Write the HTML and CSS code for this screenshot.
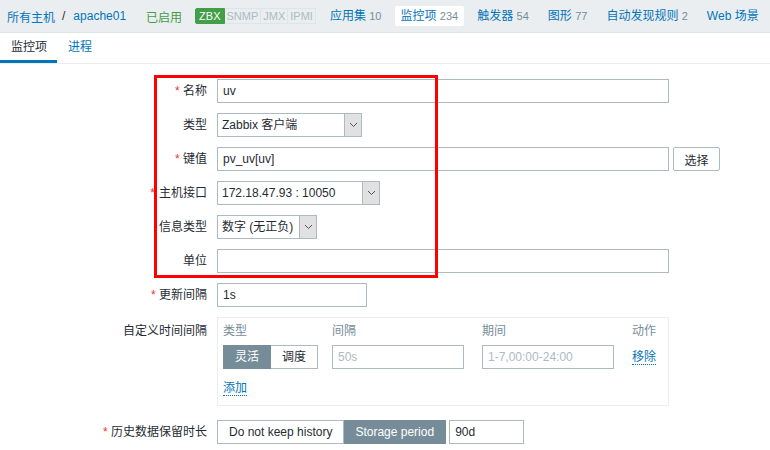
FILE: index.html
```html
<!DOCTYPE html>
<html lang="zh">
<head>
    <meta charset="UTF-8">
    <title>监控项</title>
    <link rel="stylesheet" href="styles.css">
</head>
<body>
    <div class="header">
        <a class="crumb">所有主机</a>
        <span class="sep">/</span>
        <a class="crumb">apache01</a>
        <span class="status">已启用</span>
        <div class="badges">
            <span class="badge badge-on">ZBX</span><span class="badge">SNMP</span><span class="badge">JMX</span><span class="badge">IPMI</span>
        </div>
        <div class="nav">
            <a class="nav-item">应用集 <span class="count">10</span></a>
            <a class="nav-item active">监控项 <span class="count">234</span></a>
            <a class="nav-item">触发器 <span class="count">54</span></a>
            <a class="nav-item">图形 <span class="count">77</span></a>
            <a class="nav-item">自动发现规则 <span class="count">2</span></a>
            <a class="nav-item">Web 场景</a>
        </div>
    </div>

    <div class="tabs">
        <a class="tab tab-active">监控项</a>
        <a class="tab">进程</a>
    </div>

    <div class="form">
        <label class="lbl"><span class="req">*</span> 名称</label>
        <div><input class="inp wide" value="uv"></div>

        <label class="lbl">类型</label>
        <div><div class="select" style="width:145px"><span class="sel-text">Zabbix 客户端</span><span class="sel-btn"><svg width="9" height="6" viewBox="0 0 9 6"><polyline points="1,1 4.5,4.5 8,1" fill="none" stroke="#555" stroke-width="1"/></svg></span></div></div>

        <label class="lbl"><span class="req">*</span> 键值</label>
        <div class="line"><input class="inp wide" value="pv_uv[uv]"><button class="btn">选择</button></div>

        <label class="lbl"><span class="req req-tight">*</span>主机接口</label>
        <div><div class="select" style="width:163px"><span class="sel-text">172.18.47.93 : 10050</span><span class="sel-btn"><svg width="9" height="6" viewBox="0 0 9 6"><polyline points="1,1 4.5,4.5 8,1" fill="none" stroke="#555" stroke-width="1"/></svg></span></div></div>

        <label class="lbl">信息类型</label>
        <div><div class="select" style="width:100px"><span class="sel-text">数字 (无正负)</span><span class="sel-btn"><svg width="9" height="6" viewBox="0 0 9 6"><polyline points="1,1 4.5,4.5 8,1" fill="none" stroke="#555" stroke-width="1"/></svg></span></div></div>

        <label class="lbl">单位</label>
        <div><input class="inp wide" value=""></div>

        <label class="lbl"><span class="req">*</span> 更新间隔</label>
        <div><input class="inp" style="width:150px" value="1s"></div>

        <label class="lbl lbl-top">自定义时间间隔</label>
        <div class="intervals">
            <div class="iv-grid">
                <span class="iv-head">类型</span>
                <span class="iv-head">间隔</span>
                <span class="iv-head">期间</span>
                <span class="iv-head">动作</span>

                <div class="seg">
                    <span class="seg-item seg-on">灵活</span><span class="seg-item">调度</span>
                </div>
                <div><input class="inp iv-inp" placeholder="50s"></div>
                <div><input class="inp iv-inp" placeholder="1-7,00:00-24:00"></div>
                <a class="link">移除</a>
            </div>
            <a class="link add">添加</a>
        </div>

        <label class="lbl"><span class="req">*</span> 历史数据保留时长</label>
        <div class="line line-tight">
            <div class="seg">
                <span class="seg-item">Do not keep history</span><span class="seg-item seg-on">Storage period</span>
            </div>
            <input class="inp" style="width:75px" value="90d">
        </div>
    </div>

    <div class="highlight"></div>
</body>
</html>
```

FILE: styles.css
```css
body {
    margin: 0;
    font-family: "Liberation Sans", "Noto Sans CJK SC", sans-serif;
    font-size: 12px;
    color: #1f2c33;
    background-color: #ffffff;
}

a {
    color: #0275b8;
    text-decoration: none;
}

.header {
    display: flex;
    align-items: center;
    height: 32px;
    padding-left: 7px;
    background-color: #ebeef0;
    border-bottom: 1px solid #dfe4e7;
    white-space: nowrap;
    overflow: hidden;
}

.header > * {
    flex-shrink: 0;
}

.sep {
    margin: 0 8px 0 7px;
}

.status {
    color: #429e47;
    margin-left: 20px;
}

.badges {
    display: flex;
    margin-left: 13px;
}

.badge {
    height: 14px;
    line-height: 14px;
    padding: 0 2px;
    border: 1px solid #dfe4e7;
    color: #acbbc2;
    font-size: 11px;
}

.badge + .badge {
    border-left: none;
}

.badge-on {
    background-color: #429e47;
    border-color: #429e47;
    color: #ffffff;
    padding: 0 3px;
    border-radius: 2px 0 0 2px;
}

.nav {
    display: flex;
    gap: 7px;
    margin-left: 8px;
}

.nav-item {
    flex-shrink: 0;
    height: 20px;
    line-height: 20px;
    padding: 0 6px;
    border-radius: 2px;
}

.nav-item.active {
    background-color: #ffffff;
}

.count {
    color: #768d99;
    font-size: 11px;
}

.tabs {
    display: flex;
    height: 30px;
    border-bottom: 1px solid #ebeef0;
}

.tab {
    padding: 0 10px 0 11px;
    line-height: 28px;
    border-bottom: 3px solid transparent;
}

.tab-active {
    color: #1f2c33;
    border-bottom-color: #0275b8;
}

.form {
    display: grid;
    grid-template-columns: 207px 1fr;
    column-gap: 10px;
    row-gap: 10px;
    margin-top: 15px;
}

.lbl {
    text-align: right;
    line-height: 24px;
    white-space: nowrap;
}

.lbl-top {
    line-height: 16px;
    padding-top: 6px;
}

.req {
    color: #e33734;
}

.req-tight {
    margin-right: 4px;
}

.line {
    display: flex;
    align-items: center;
    gap: 4px;
}

.line-tight {
    gap: 3px;
}

.inp {
    box-sizing: border-box;
    height: 24px;
    padding: 0 5px;
    border: 1px solid #acbbc2;
    font-family: inherit;
    font-size: 12px;
    color: #1f2c33;
    margin: 0;
    outline: none;
}

.inp::placeholder {
    color: #acbbc2;
}

.wide {
    width: 452px;
}

.btn {
    box-sizing: border-box;
    height: 24px;
    width: 47px;
    border: 1px solid #acbbc2;
    border-radius: 2px;
    background-color: #ffffff;
    font-family: inherit;
    font-size: 12px;
    color: #1f2c33;
}

.select {
    box-sizing: border-box;
    display: flex;
    height: 24px;
    border: 1px solid #acbbc2;
}

.sel-text {
    flex: 1;
    line-height: 22px;
    padding-left: 4px;
    white-space: nowrap;
    overflow: hidden;
}

.sel-btn {
    width: 16px;
    display: flex;
    align-items: center;
    justify-content: center;
    background-color: #e1e1e1;
    border-left: 1px solid #acbbc2;
}

.intervals {
    box-sizing: border-box;
    width: 452px;
    border: 1px solid #ebeef0;
    padding: 5px 5px 9px 5px;
    margin-bottom: 4px;
}

.iv-grid {
    display: grid;
    grid-template-columns: 109px 150px 150px auto;
    row-gap: 6px;
}

.iv-head {
    color: #768d99;
    line-height: 16px;
}

.iv-inp {
    width: 132px;
}

.seg {
    display: flex;
}

.seg-item {
    box-sizing: border-box;
    height: 24px;
    line-height: 22px;
    padding: 0 11px;
    border: 1px solid #acbbc2;
    background-color: #ffffff;
    white-space: nowrap;
}

.seg-item + .seg-item {
    border-left: none;
}

.seg-on {
    background-color: #768d99;
    border-color: #768d99;
    color: #ffffff;
}

.link {
    align-self: center;
    justify-self: start;
    line-height: 14px;
    border-bottom: 1px dotted #0275b8;
}

.add {
    display: inline-block;
    margin-top: 12px;
}

.highlight {
    position: absolute;
    left: 154px;
    top: 75px;
    width: 278px;
    height: 197px;
    border: 3px solid #ff0000;
}
```
